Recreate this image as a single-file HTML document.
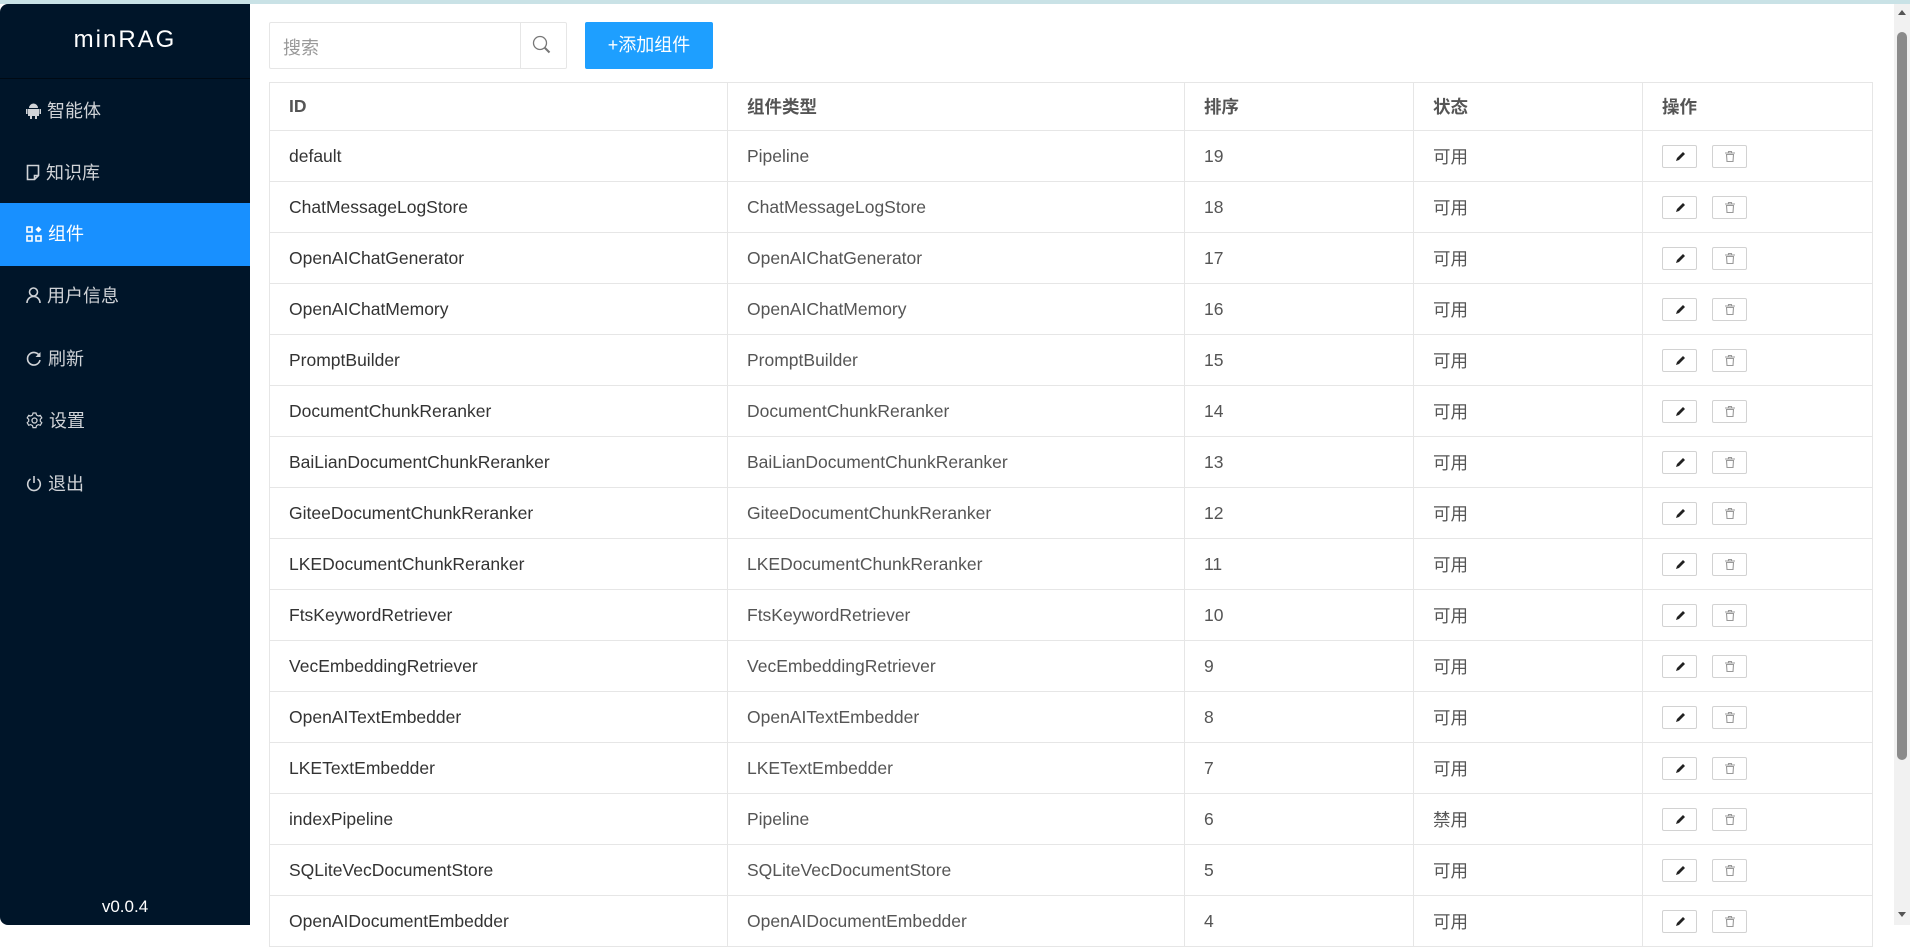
<!DOCTYPE html>
<html><head><meta charset="utf-8"><style>
*{box-sizing:border-box;margin:0;padding:0}
body{width:1910px;height:925px;overflow:hidden;background:#fff;font-family:"Liberation Sans","Noto Sans CJK SC",sans-serif;position:relative}
.top{position:absolute;left:0;top:0;width:1910px;height:4px;background:#c9e2e6}
.side{position:absolute;left:0;top:4px;width:250px;height:921px;background:#001529;border-radius:8px 0 0 8px}
.logo{position:absolute;top:22px;width:250px;text-align:center;color:#fff;font-size:24px;letter-spacing:2px}
.sep{position:absolute;top:74px;left:0;width:250px;height:1px;background:#000a14}
.mi{position:absolute;left:0;width:250px;height:63px;line-height:63px;color:#d0d3d7;font-size:18px;padding-left:26px}
.mi svg{vertical-align:-2px;margin-right:6px}
.mi.sel{background:#1890ff;color:#fff}
.ver{position:absolute;bottom:0;width:250px;text-align:center;color:#fff;font-size:17px;top:893px}
.search{position:absolute;left:269px;top:22px;width:298px;height:47px;border:1px solid #e6e6e6;border-radius:2px}
.search span{position:absolute;left:13px;top:11px;font-size:18px;color:#999}
.search .d{position:absolute;left:250px;top:0;width:1px;height:45px;background:#e6e6e6}
.btn{position:absolute;left:585px;top:22px;width:128px;height:47px;background:#1e9fff;color:#fff;font-size:18px;text-align:center;line-height:47px;border-radius:2px}
table{position:absolute;left:269px;top:82px;border-collapse:collapse;table-layout:fixed;width:1603px}
td,th{border:1px solid #e6e6e6;padding:0 0 0 19px;text-align:left;font-size:17.5px;color:#555;height:51px;font-weight:normal}
th{height:48px;font-weight:bold;color:#555}
td:first-child{color:#333}
.b{display:inline-block;width:35px;height:23px;border:1px solid #d2d2d2;border-radius:2px;vertical-align:middle;position:relative;margin-right:15px;background:#fff}
.b svg{position:absolute;left:11px;top:4px}
.sb{position:absolute;left:1894px;top:4px;width:16px;height:921px;background:#f1f1f1}
.th{position:absolute;left:3px;top:28px;width:10px;height:728px;background:#8b8b8b;border-radius:5px}
.ar{position:absolute;left:4px;width:0;height:0;border-left:4px solid transparent;border-right:4px solid transparent}
</style></head><body>
<div class="top"></div>
<div class="side">
<div class="logo">minRAG</div>
<div class="sep"></div>
<div class="mi" style="top:76px"><svg width="15" height="17" viewBox="0 0 15 17"><path d="M3 6a4.5 4.5 0 0 1 9 0z M2 7h11v7H2z M0 7h1.5v5H0z M13.5 7H15v5h-1.5z M4 14h2v3H4z M9 14h2v3H9z" fill="#d0d3d7"/></svg>智能体</div>
<div class="mi" style="top:138px"><svg width="14" height="17" viewBox="0 0 14 17"><path d="M1.5 1.5h11v10l-4 4h-7z M8.5 15.5v-4h4" fill="none" stroke="#d0d3d7" stroke-width="1.6"/></svg>知识库</div>
<div class="mi sel" style="top:199px"><svg width="16" height="16" viewBox="0 0 16 16"><path d="M1 1h5v5H1z M1 10h5v5H1z M10 10h5v5h-5z" fill="none" stroke="#fff" stroke-width="1.6"/><path d="M12.5 0.5l3 3-3 3-3-3z" fill="#fff"/></svg>组件</div>
<div class="mi" style="top:261px"><svg width="15" height="17" viewBox="0 0 15 17"><circle cx="7.5" cy="5" r="4" fill="none" stroke="#d0d3d7" stroke-width="1.6"/><path d="M1 16c0-4 3-6.5 6.5-6.5S14 12 14 16" fill="none" stroke="#d0d3d7" stroke-width="1.6"/></svg>用户信息</div>
<div class="mi" style="top:324px"><svg width="16" height="16" viewBox="0 0 16 16"><path d="M13.5 5A6.3 6.3 0 1 0 14 9" fill="none" stroke="#d0d3d7" stroke-width="1.6"/><path d="M14.5 1v5h-5z" fill="#d0d3d7"/></svg>刷新</div>
<div class="mi" style="top:386px"><svg width="17" height="17" viewBox="0 0 17 17"><circle cx="8.5" cy="8.5" r="2.5" fill="none" stroke="#d0d3d7" stroke-width="1.3"/><path d="M7 1h3l.5 2 1.8 1 2-.7 1.5 2.6-1.5 1.4v2l1.5 1.4-1.5 2.6-2-.7-1.8 1-.5 2H7l-.5-2-1.8-1-2 .7-1.5-2.6 1.5-1.4v-2L1.2 5.9l1.5-2.6 2 .7 1.8-1z" fill="none" stroke="#d0d3d7" stroke-width="1.2"/></svg>设置</div>
<div class="mi" style="top:449px"><svg width="16" height="17" viewBox="0 0 16 17"><path d="M4.5 4A6.3 6.3 0 1 0 11.5 4" fill="none" stroke="#d0d3d7" stroke-width="1.6"/><path d="M8 1v7" stroke="#d0d3d7" stroke-width="1.6"/></svg>退出</div>
<div class="ver">v0.0.4</div>
</div>
<div class="search"><span>搜索</span><div class="d"></div><svg style="position:absolute;left:262px;top:12px" width="20" height="20" viewBox="0 0 20 20"><circle cx="8" cy="8" r="6.5" fill="none" stroke="#777" stroke-width="1.3"/><path d="M12.5 12.5l5 5" stroke="#777" stroke-width="2"/></svg></div>
<div class="btn">+添加组件</div>
<table>
<colgroup><col style="width:458px"><col style="width:457px"><col style="width:229px"><col style="width:229px"><col style="width:230px"></colgroup>
<tr><th>ID</th><th>组件类型</th><th>排序</th><th>状态</th><th>操作</th></tr>
<tr><td>default</td><td>Pipeline</td><td>19</td><td>可用</td><td>OPS</td></tr>
<tr><td>ChatMessageLogStore</td><td>ChatMessageLogStore</td><td>18</td><td>可用</td><td>OPS</td></tr>
<tr><td>OpenAIChatGenerator</td><td>OpenAIChatGenerator</td><td>17</td><td>可用</td><td>OPS</td></tr>
<tr><td>OpenAIChatMemory</td><td>OpenAIChatMemory</td><td>16</td><td>可用</td><td>OPS</td></tr>
<tr><td>PromptBuilder</td><td>PromptBuilder</td><td>15</td><td>可用</td><td>OPS</td></tr>
<tr><td>DocumentChunkReranker</td><td>DocumentChunkReranker</td><td>14</td><td>可用</td><td>OPS</td></tr>
<tr><td>BaiLianDocumentChunkReranker</td><td>BaiLianDocumentChunkReranker</td><td>13</td><td>可用</td><td>OPS</td></tr>
<tr><td>GiteeDocumentChunkReranker</td><td>GiteeDocumentChunkReranker</td><td>12</td><td>可用</td><td>OPS</td></tr>
<tr><td>LKEDocumentChunkReranker</td><td>LKEDocumentChunkReranker</td><td>11</td><td>可用</td><td>OPS</td></tr>
<tr><td>FtsKeywordRetriever</td><td>FtsKeywordRetriever</td><td>10</td><td>可用</td><td>OPS</td></tr>
<tr><td>VecEmbeddingRetriever</td><td>VecEmbeddingRetriever</td><td>9</td><td>可用</td><td>OPS</td></tr>
<tr><td>OpenAITextEmbedder</td><td>OpenAITextEmbedder</td><td>8</td><td>可用</td><td>OPS</td></tr>
<tr><td>LKETextEmbedder</td><td>LKETextEmbedder</td><td>7</td><td>可用</td><td>OPS</td></tr>
<tr><td>indexPipeline</td><td>Pipeline</td><td>6</td><td>禁用</td><td>OPS</td></tr>
<tr><td>SQLiteVecDocumentStore</td><td>SQLiteVecDocumentStore</td><td>5</td><td>可用</td><td>OPS</td></tr>
<tr><td>OpenAIDocumentEmbedder</td><td>OpenAIDocumentEmbedder</td><td>4</td><td>可用</td><td>OPS</td></tr>
</table>
<div class="sb"><div class="ar" style="top:6px;border-bottom:5px solid #555"></div><div class="th"></div><div class="ar" style="top:908px;border-top:5px solid #555"></div></div>
<script>
var ops='<span class="b"><svg width="12" height="13" viewBox="0 0 12 13"><path d="M2 11l1-3 6-6 2 2-6 6z" fill="#222"/></svg></span><span class="b"><svg width="12" height="13" viewBox="0 0 12 13"><path d="M1 3h10M4.5 3V1.5h3V3M2.5 4.5h7l-.5 7h-6z" fill="none" stroke="#999" stroke-width="1.1"/></svg></span>';
document.querySelectorAll('td').forEach(function(t){if(t.textContent==='OPS')t.innerHTML=ops;});
</script>
</body></html>
